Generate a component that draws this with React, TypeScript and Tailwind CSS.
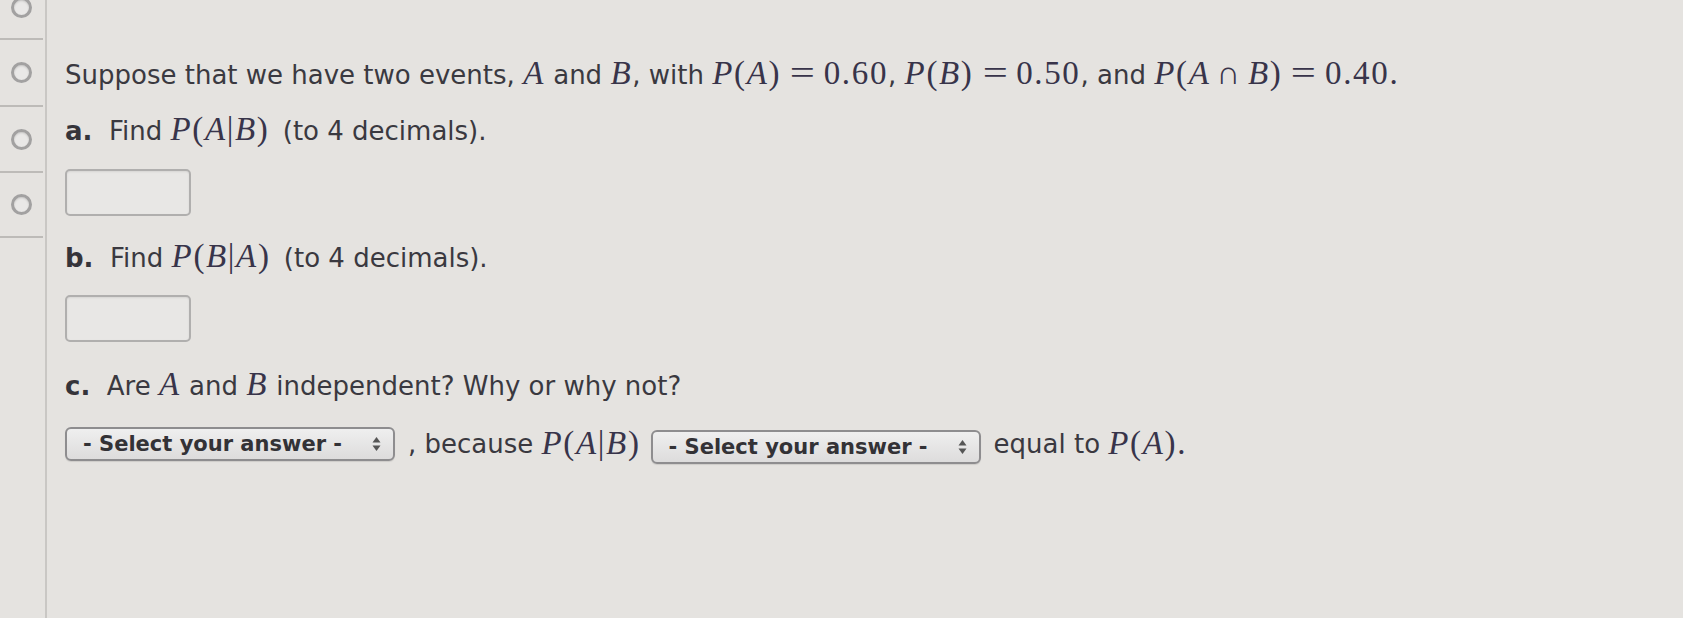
import React from "react";

const Mi = ({ children }: { children: React.ReactNode }) => (
  <span className="italic">{children}</span>
);

const Math = ({ children }: { children: React.ReactNode }) => (
  <span className="font-['Liberation_Serif',serif] text-[33px] tracking-[0.05em] text-[#38344a] whitespace-nowrap">
    {children}
  </span>
);

const Eq = () => (
  <span className="inline-block mx-[12px] scale-x-[1.35] tracking-normal">=</span>
);

const Circle = ({ className = "" }: { className?: string }) => (
  <div
    className={
      "w-[21px] h-[21px] rounded-full border-[3px] border-[#a2a1a1] bg-[#e9e8e7] shadow-[inset_0_1px_2px_rgba(0,0,0,0.15)] " +
      className
    }
  />
);

const Select = ({ className = "" }: { className?: string }) => (
  <div
    className={
      "h-[34px] w-[330px] shrink-0 rounded-[6px] border-2 border-[#8e8d8f] bg-gradient-to-b from-[#efefef] to-[#dddcdc] flex items-center justify-between pl-[16px] pr-[12px] shadow-[0_1px_1px_rgba(0,0,0,0.1)] " +
      className
    }
  >
    <span className="font-['DejaVu_Sans',Verdana,sans-serif] font-bold text-[21px] text-[#333236] leading-none tracking-normal">
      - Select your answer -
    </span>
    <svg width="9" height="16" viewBox="0 0 9 16">
      <path d="M4.5 1 L8.5 6.5 L0.5 6.5 Z" fill="#555" />
      <path d="M4.5 15 L8.5 9.5 L0.5 9.5 Z" fill="#555" />
    </svg>
  </div>
);

const Input = () => (
  <div className="w-[126px] h-[47px] rounded-[5px] border-2 border-[#b0afae] bg-[#e8e7e5] shadow-[inset_0_1px_2px_rgba(0,0,0,0.08)]" />
);

const Line = ({ children, className = "" }: { children: React.ReactNode; className?: string }) => (
  <div className={"h-[32px] leading-[32px] whitespace-nowrap flex items-baseline " + className}>
    {children}
  </div>
);

export default function App() {
  return (
    <div className="w-[1683px] h-[618px] bg-[#e5e3e0] flex overflow-hidden font-['DejaVu_Sans',Verdana,sans-serif] text-[26px] text-[#3a3940]">
      {/* left gutter */}
      <div className="w-[47px] shrink-0 border-r-2 border-[#c9c7c4] flex flex-col">
        <div className="h-[40px] w-[43px] border-b-2 border-[#bdbbb8] flex justify-center items-start">
          <Circle className="-mt-[3px]" />
        </div>
        <div className="h-[67px] w-[43px] border-b-2 border-[#bdbbb8] flex justify-center items-center">
          <Circle />
        </div>
        <div className="h-[66px] w-[43px] border-b-2 border-[#bdbbb8] flex justify-center items-center">
          <Circle />
        </div>
        <div className="h-[65px] w-[43px] border-b-2 border-[#bdbbb8] flex justify-center items-center">
          <Circle />
        </div>
      </div>

      {/* main content */}
      <div className="flex flex-col pl-[18px] pt-[57px]">
        <Line>
          <span>Suppose that we have two events,&nbsp;</span>
          <Math><Mi>A</Mi></Math>
          <span>&nbsp;and&nbsp;</span>
          <Math><Mi>B</Mi></Math>
          <span>, with&nbsp;</span>
          <Math>
            <Mi>P</Mi>(<Mi>A</Mi>)<Eq />0.60
          </Math>
          <span>,&nbsp;</span>
          <Math>
            <Mi>P</Mi>(<Mi>B</Mi>)<Eq />0.50
          </Math>
          <span>, and&nbsp;</span>
          <Math>
            <Mi>P</Mi>(<Mi>A</Mi>
            <span className="mx-[6px]">∩</span>
            <Mi>B</Mi>)<Eq />0.40.
          </Math>
        </Line>

        <Line className="mt-[24px]">
          <span className="font-bold text-[#35343a]">a.</span>
          <span>&nbsp;&nbsp;Find&nbsp;</span>
          <Math>
            <Mi>P</Mi>(<Mi>A</Mi>|<Mi>B</Mi>)
          </Math>
          <span className="ml-[5px]">&nbsp;(to 4 decimals).</span>
        </Line>

        <div className="mt-[24px]">
          <Input />
        </div>

        <Line className="mt-[24px]">
          <span className="font-bold text-[#35343a]">b.</span>
          <span>&nbsp;&nbsp;Find&nbsp;</span>
          <Math>
            <Mi>P</Mi>(<Mi>B</Mi>|<Mi>A</Mi>)
          </Math>
          <span className="ml-[5px]">&nbsp;(to 4 decimals).</span>
        </Line>

        <div className="mt-[23px]">
          <Input />
        </div>

        <Line className="mt-[26px]">
          <span className="font-bold text-[#35343a]">c.</span>
          <span>&nbsp;&nbsp;Are&nbsp;</span>
          <Math><Mi>A</Mi></Math>
          <span>&nbsp;and&nbsp;</span>
          <Math><Mi>B</Mi></Math>
          <span>&nbsp;independent? Why or why not?</span>
        </Line>

        <div className="mt-[27px] flex items-center h-[34px] whitespace-nowrap">
          <Select />
          <span className="ml-[13px]">, because&nbsp;</span>
          <Math>
            <Mi>P</Mi>(<Mi>A</Mi>|<Mi>B</Mi>)
          </Math>
          <Select className="ml-[10px] mt-[6px]" />
          <span className="ml-[13px]">equal to&nbsp;</span>
          <Math>
            <Mi>P</Mi>(<Mi>A</Mi>).
          </Math>
        </div>
      </div>
    </div>
  );
}
